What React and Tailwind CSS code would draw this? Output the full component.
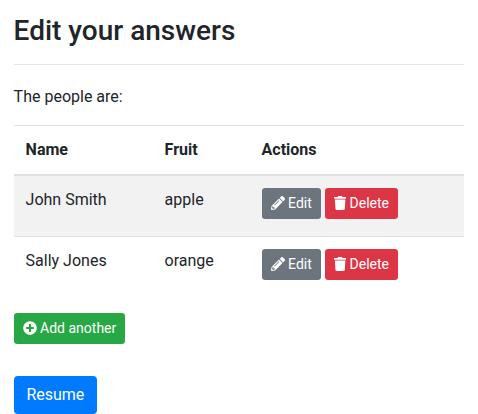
import { FaPencilAlt, FaTrash, FaPlusCircle } from "react-icons/fa";

const people = [
  { name: "John Smith", fruit: "apple", row: "h-[62px] bg-[#f2f2f2]" },
  { name: "Sally Jones", fruit: "orange", row: "h-[60px] bg-white" },
];

function SmallButton({ color, icon: Icon, iconWidth = "w-[14px]", children }) {
  return (
    <button className={`inline-flex h-[31px] items-center gap-[3.5px] rounded-[3.2px] px-[9px] text-sm leading-[21px] text-white ${color}`}>
      <Icon className={`mb-px h-[14px] ${iconWidth}`} />
      {children}
    </button>
  );
}

export default function App() {
  return (
    <main className="h-[414px] overflow-hidden bg-white pl-[13.6px] pr-[14px] pt-[14px] font-[Roboto,sans-serif] text-base leading-6 text-[#212529]">
      <h1 className="text-[28px] font-medium leading-[34px]">Edit your answers</h1>
      <hr className="mt-4 border-t border-black/10" />
      <p className="mt-5">The people are:</p>
      <table className="mt-4 w-full border-collapse text-left">
        <thead>
          <tr className="h-[49px] border-b-2 border-t border-[#dee2e6]">
            <th className="w-[139px] px-3 py-0 font-bold">Name</th>
            <th className="w-[97px] px-3 py-0 font-bold">Fruit</th>
            <th className="px-3 py-0 font-bold">Actions</th>
          </tr>
        </thead>
        <tbody>
          {people.map((p) => (
            <tr key={p.name} className={`border-t border-[#dee2e6] align-top ${p.row}`}>
              <td className="px-3 pt-3">{p.name}</td>
              <td className="px-3 pt-3">{p.fruit}</td>
              <td className="px-3 pt-3">
                <div className="flex gap-1">
                  <SmallButton color="bg-[#6c757d]" icon={FaPencilAlt}>Edit</SmallButton>
                  <SmallButton color="bg-[#dc3545]" icon={FaTrash} iconWidth="w-[12.25px]">Delete</SmallButton>
                </div>
              </td>
            </tr>
          ))}
        </tbody>
      </table>
      <div className="mt-4 flex">
        <SmallButton color="bg-[#28a745]" icon={FaPlusCircle}>Add another</SmallButton>
      </div>
      <button className="mt-8 h-[38px] rounded bg-[#007bff] px-[12.8px] text-white">Resume</button>
    </main>
  );
}
